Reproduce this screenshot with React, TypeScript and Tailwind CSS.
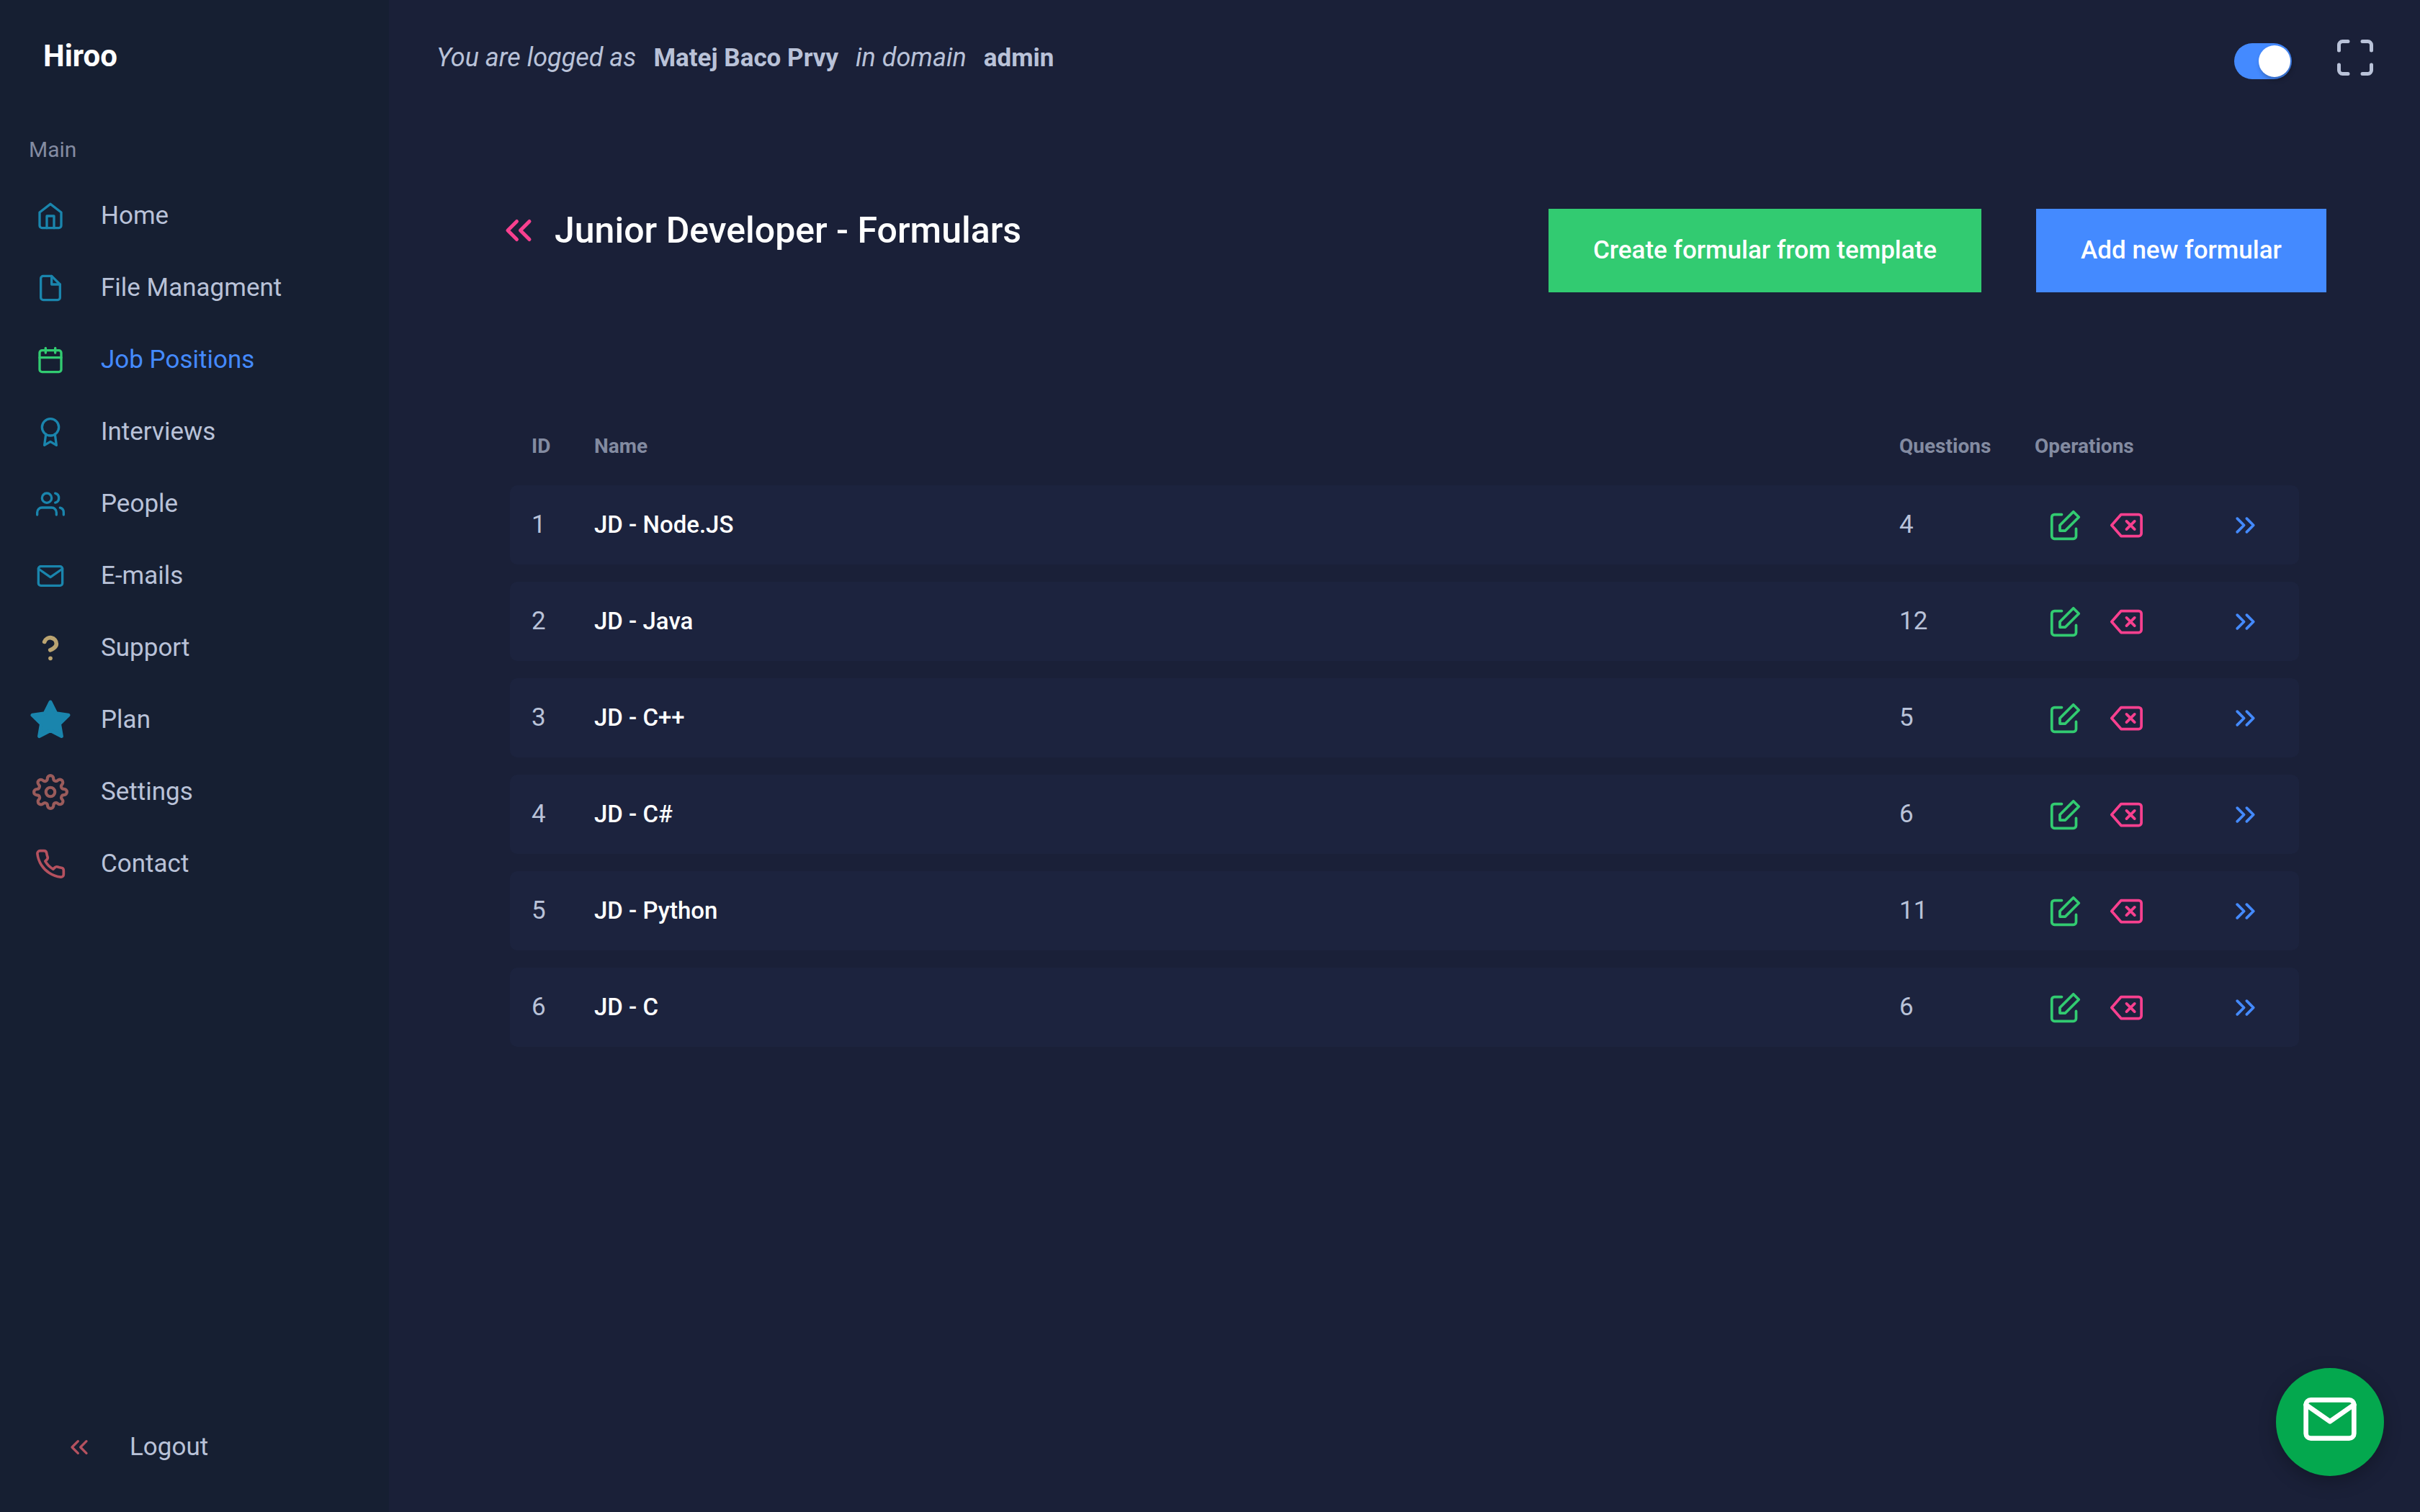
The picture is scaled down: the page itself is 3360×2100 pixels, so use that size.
import { useState, type ReactNode } from "react";

type IconProps = { className: string; viewBox?: string; children: ReactNode };

function Icon({ className, viewBox = "0 0 24 24", children }: IconProps) {
  return (
    <svg
      aria-hidden="true"
      className={`shrink-0 ${className}`}
      viewBox={viewBox}
      fill="none"
      stroke="currentColor"
      strokeWidth={2}
      strokeLinecap="round"
      strokeLinejoin="round"
    >
      {children}
    </svg>
  );
}

const mailShapes = (
  <>
    <path d="M4 4h16c1.1 0 2 .9 2 2v12c0 1.1-.9 2-2 2H4c-1.1 0-2-.9-2-2V6c0-1.1.9-2 2-2z" />
    <polyline points="22,6 12,13 2,6" />
  </>
);

const chevronsLeftShapes = (
  <>
    <polyline points="11 17 6 12 11 7" />
    <polyline points="18 17 13 12 18 7" />
  </>
);

const navItems: { label: string; active?: boolean; icon: ReactNode }[] = [
  {
    label: "Home",
    icon: (
      <Icon className="size-10 text-[#1a85ad]">
        <path d="M3 9l9-7 9 7v11a2 2 0 0 1-2 2H5a2 2 0 0 1-2-2z" />
        <polyline points="9 22 9 12 15 12 15 22" />
      </Icon>
    ),
  },
  {
    label: "File Managment",
    icon: (
      <Icon className="size-10 text-[#1a85ad]">
        <path d="M13 2H6a2 2 0 0 0-2 2v16a2 2 0 0 0 2 2h12a2 2 0 0 0 2-2V9z" />
        <polyline points="13 2 13 9 20 9" />
      </Icon>
    ),
  },
  {
    label: "Job Positions",
    active: true,
    icon: (
      <Icon className="size-10 text-[#32cb71]">
        <rect x="3" y="4" width="18" height="18" rx="2" ry="2" />
        <line x1="16" y1="2" x2="16" y2="6" />
        <line x1="8" y1="2" x2="8" y2="6" />
        <line x1="3" y1="10" x2="21" y2="10" />
      </Icon>
    ),
  },
  {
    label: "Interviews",
    icon: (
      <Icon className="size-10 text-[#1a85ad]">
        <circle cx="12" cy="8" r="7" />
        <polyline points="8.21 13.89 7 23 12 20 17 23 15.79 13.88" />
      </Icon>
    ),
  },
  {
    label: "People",
    icon: (
      <Icon className="size-10 text-[#1a85ad]">
        <path d="M17 21v-2a4 4 0 0 0-4-4H5a4 4 0 0 0-4 4v2" />
        <circle cx="9" cy="7" r="4" />
        <path d="M23 21v-2a4 4 0 0 0-3-3.87" />
        <path d="M16 3.13a4 4 0 0 1 0 7.75" />
      </Icon>
    ),
  },
  { label: "E-mails", icon: <Icon className="size-10 text-[#1a85ad]">{mailShapes}</Icon> },
  {
    label: "Support",
    icon: (
      <Icon className="size-10 text-[#bba471]" viewBox="5 5 14 14">
        <path d="M9.09 9a3 3 0 0 1 5.83 1c0 2-3 3-3 3" />
        <line x1="12" y1="17" x2="12" y2="17.01" />
      </Icon>
    ),
  },
  {
    label: "Plan",
    icon: (
      <Icon className="size-15 text-[#1a85ad]">
        <polygon
          fill="currentColor"
          points="12 2 15.09 8.26 22 9.27 17 14.14 18.18 21.02 12 17.77 5.82 21.02 7 14.14 2 9.27 8.91 8.26 12 2"
        />
      </Icon>
    ),
  },
  {
    label: "Settings",
    icon: (
      <Icon className="size-[50px] text-[#9a5b5b]">
        <circle cx="12" cy="12" r="3" />
        <path d="M19.4 15a1.65 1.65 0 0 0 .33 1.82l.06.06a2 2 0 0 1 0 2.83 2 2 0 0 1-2.83 0l-.06-.06a1.65 1.65 0 0 0-1.82-.33 1.65 1.65 0 0 0-1 1.51V21a2 2 0 0 1-2 2 2 2 0 0 1-2-2v-.09A1.65 1.65 0 0 0 9 19.4a1.65 1.65 0 0 0-1.82.33l-.06.06a2 2 0 0 1-2.83 0 2 2 0 0 1 0-2.83l.06-.06a1.65 1.65 0 0 0 .33-1.82 1.65 1.65 0 0 0-1.51-1H3a2 2 0 0 1-2-2 2 2 0 0 1 2-2h.09A1.65 1.65 0 0 0 4.6 9a1.65 1.65 0 0 0-.33-1.82l-.06-.06a2 2 0 0 1 0-2.83 2 2 0 0 1 2.83 0l.06.06a1.65 1.65 0 0 0 1.82.33H9a1.65 1.65 0 0 0 1-1.51V3a2 2 0 0 1 2-2 2 2 0 0 1 2 2v.09a1.65 1.65 0 0 0 1 1.51 1.65 1.65 0 0 0 1.82-.33l.06-.06a2 2 0 0 1 2.83 0 2 2 0 0 1 0 2.83l-.06.06a1.65 1.65 0 0 0-.33 1.82V9a1.65 1.65 0 0 0 1.51 1H21a2 2 0 0 1 2 2 2 2 0 0 1-2 2h-.09a1.65 1.65 0 0 0-1.51 1z" />
      </Icon>
    ),
  },
  {
    label: "Contact",
    icon: (
      <Icon className="size-11 text-[#b4515f]">
        <path d="M22 16.92v3a2 2 0 0 1-2.18 2 19.79 19.79 0 0 1-8.63-3.07 19.5 19.5 0 0 1-6-6 19.79 19.79 0 0 1-3.07-8.67A2 2 0 0 1 4.11 2h3a2 2 0 0 1 2 1.72 12.84 12.84 0 0 0 .7 2.81 2 2 0 0 1-.45 2.11L8.09 9.91a16 16 0 0 0 6 6l1.27-1.27a2 2 0 0 1 2.11-.45 12.84 12.84 0 0 0 2.81.7A2 2 0 0 1 22 16.92z" />
      </Icon>
    ),
  },
];

const formulars = [
  { id: 1, name: "JD - Node.JS", questions: 4 },
  { id: 2, name: "JD - Java", questions: 12 },
  { id: 3, name: "JD - C++", questions: 5 },
  { id: 4, name: "JD - C#", questions: 6 },
  { id: 5, name: "JD - Python", questions: 11 },
  { id: 6, name: "JD - C", questions: 6 },
];

function Sidebar() {
  return (
    <aside className="flex w-[540px] shrink-0 flex-col bg-[#161f32] pb-10">
      <a href="#home" className="px-15 pt-12 text-[42px] leading-15 font-bold text-white">
        Hiroo
      </a>
      <h2 className="px-10 pt-20 pb-[22px] text-[30px] leading-10 font-normal text-[#838ba1]">Main</h2>
      <nav aria-label="Main">
        <ul>
          {navItems.map((item) => (
            <li key={item.label}>
              <a
                href="#nav"
                aria-current={item.active ? "page" : undefined}
                className={`flex h-25 items-center gap-10 px-10 text-[35px] ${
                  item.active ? "text-[#448aff]" : "text-[#b9c2d8]"
                }`}
              >
                <span className="flex w-15 justify-center">{item.icon}</span>
                {item.label}
              </a>
            </li>
          ))}
        </ul>
      </nav>
      <a href="#logout" className="mt-auto flex h-25 items-center gap-10 px-20 text-[35px] text-[#b9c2d8]">
        <span className="flex w-15 justify-center">
          <Icon className="size-10 text-[#b4515f]">{chevronsLeftShapes}</Icon>
        </span>
        Logout
      </a>
    </aside>
  );
}

function TopBar() {
  const [dark, setDark] = useState(true);
  return (
    <header className="flex h-40 items-center justify-between pr-15 pl-[66px] text-[#b9c2d8]">
      <p className="flex items-baseline gap-6 text-[36px]">
        <em>You are logged as</em>
        <strong className="text-[35px] font-bold">Matej Baco Prvy</strong>
        <em>in domain</em>
        <strong className="text-[35px] font-bold">admin</strong>
      </p>
      <div className="flex items-center gap-[58px]">
        <input
          type="checkbox"
          role="switch"
          aria-label="Dark mode"
          checked={dark}
          onChange={(e) => setDark(e.target.checked)}
          className="mt-2.5 flex h-[50px] w-20 cursor-pointer appearance-none items-center rounded-full bg-[#3b4462] px-0.5 before:size-11 before:rounded-full before:bg-white before:shadow-[2px_4px_6px_rgba(0,0,0,0.25)] checked:justify-end checked:bg-[#448aff]"
        />
        <button type="button" aria-label="Full screen" className="cursor-pointer">
          <Icon className="size-15">
            <path d="M8 3H5a2 2 0 0 0-2 2v3m18 0V5a2 2 0 0 0-2-2h-3m0 18h3a2 2 0 0 0 2-2v-3M3 16v3a2 2 0 0 0 2 2h3" />
          </Icon>
        </button>
      </div>
    </header>
  );
}

function FormularTable() {
  return (
    <table className="w-full border-separate border-spacing-x-0 border-spacing-y-6 text-left text-[35px]">
      <thead>
        <tr className="h-15 text-[28px] text-[#838ba1]">
          <th className="w-[87px] pl-7.5 font-bold">ID</th>
          <th className="pl-7.5 font-bold">Name</th>
          <th className="w-[188px] pl-7.5 font-bold">Questions</th>
          <th className="w-[397px] pl-7.5 font-bold">Operations</th>
        </tr>
      </thead>
      <tbody>
        {formulars.map((row) => (
          <tr key={row.id} className="h-[110px] text-[#b9c2d8] *:bg-[#1c233e]">
            <td className="rounded-l-[10px] pl-7.5">{row.id}</td>
            <td className="pl-7.5 text-[33px] font-medium text-white">{row.name}</td>
            <td className="pl-7.5">{row.questions}</td>
            <td className="rounded-r-[10px] pr-13 pl-12.5">
              <div className="flex items-center gap-10">
                <button type="button" aria-label={`Edit ${row.name}`} className="cursor-pointer text-[#32cb71]">
                  <Icon className="size-[45px]">
                    <path d="M20 14.66V20a2 2 0 0 1-2 2H4a2 2 0 0 1-2-2V6a2 2 0 0 1 2-2h5.34" />
                    <polygon points="18 2 22 6 12 16 8 16 8 12 18 2" />
                  </Icon>
                </button>
                <button type="button" aria-label={`Delete ${row.name}`} className="cursor-pointer text-[#f8408f]">
                  <Icon className="size-[45px]">
                    <path d="M21 4H8l-7 8 7 8h13a2 2 0 0 0 2-2V6a2 2 0 0 0-2-2z" />
                    <line x1="18" y1="9" x2="12" y2="15" />
                    <line x1="12" y1="9" x2="18" y2="15" />
                  </Icon>
                </button>
                <a href="#formular" aria-label={`Open ${row.name}`} className="ml-auto text-[#448aff]">
                  <Icon className="size-[45px]">
                    <polyline points="13 17 18 12 13 7" />
                    <polyline points="6 17 11 12 6 7" />
                  </Icon>
                </a>
              </div>
            </td>
          </tr>
        ))}
      </tbody>
    </table>
  );
}

export default function App() {
  return (
    <div className="flex min-h-screen bg-[#1a2038] font-['Roboto',sans-serif]">
      <Sidebar />
      <div className="flex min-w-0 flex-1 flex-col">
        <TopBar />
        <main className="pt-[130px]">
          <div className="flex items-start justify-between pr-[130px] pl-[150px]">
            <div className="flex items-center gap-5">
              <a href="#positions" aria-label="Back to job positions" className="text-[#f8408f]">
                <Icon className="size-15">{chevronsLeftShapes}</Icon>
              </a>
              <h1 className="text-[50px] leading-15 font-medium text-white">Junior Developer - Formulars</h1>
            </div>
            <div className="flex gap-[76px] text-[35px] font-medium text-white">
              <button type="button" className="h-29 cursor-pointer bg-[#32cb71] px-[62px]">
                Create formular from template
              </button>
              <button type="button" className="h-29 cursor-pointer bg-[#448aff] px-[62px]">
                Add new formular
              </button>
            </div>
          </div>
          <div className="px-42 pt-40">
            <FormularTable />
          </div>
        </main>
      </div>
      <button
        type="button"
        aria-label="Send a message"
        className="fixed right-[50px] bottom-[50px] flex size-[150px] cursor-pointer items-center justify-center rounded-full bg-[#04a84e] pb-2 text-white shadow-[0_8px_24px_rgba(0,0,0,0.25)]"
      >
        <Icon className="size-20">{mailShapes}</Icon>
      </button>
    </div>
  );
}
